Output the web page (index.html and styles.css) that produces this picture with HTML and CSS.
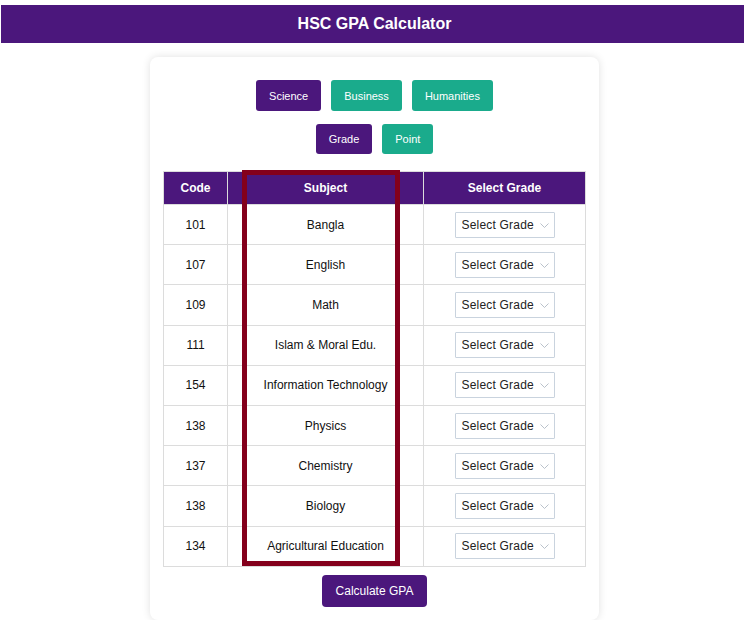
FILE: index.html
```html
<!DOCTYPE html>
<html lang="en">
<head>
    <meta charset="UTF-8">
    <meta name="viewport" content="width=device-width, initial-scale=1.0">
    <title>HSC GPA Calculator</title>
    <link rel="stylesheet" href="styles.css">
</head>
<body>
    <div class="page">
        <header>
            <h1>HSC GPA Calculator</h1>
        </header>

        <div class="card">
            <!-- Group / mode buttons -->
            <div class="btn-row">
                <button class="btn purple">Science</button>
                <button class="btn teal">Business</button>
                <button class="btn teal">Humanities</button>
            </div>
            <div class="btn-row">
                <button class="btn purple">Grade</button>
                <button class="btn teal">Point</button>
            </div>

            <div class="table-wrap">
                <table>
                    <thead>
                        <tr>
                            <th class="col-code">Code</th>
                            <th class="col-subject">Subject</th>
                            <th>Select Grade</th>
                        </tr>
                    </thead>
                    <tbody id="rows"></tbody>
                </table>
                <div class="highlight"></div>
            </div>

            <button class="btn purple calc">Calculate GPA</button>
        </div>
    </div>

    <script>
        var subjects = [
            ["101", "Bangla"],
            ["107", "English"],
            ["109", "Math"],
            ["111", "Islam &amp; Moral Edu."],
            ["154", "Information Technology"],
            ["138", "Physics"],
            ["137", "Chemistry"],
            ["138", "Biology"],
            ["134", "Agricultural Education"]
        ];
        var chevron = '<svg class="chev" width="9" height="5" viewBox="0 0 9 5"><path d="M0.5 0.5 L4.5 4.5 L8.5 0.5" fill="none" stroke="#b9c1ca" stroke-width="1"/></svg>';
        var html = "";
        subjects.forEach(function (s) {
            html += '<tr><td>' + s[0] + '</td><td>' + s[1] + '</td><td>' +
                '<span class="select-box"><select><option>Select Grade</option>' +
                '<option>A+</option><option>A</option><option>A-</option><option>B</option>' +
                '<option>C</option><option>D</option><option>F</option></select>' + chevron + '</span></td></tr>';
        });
        document.getElementById("rows").innerHTML = html;
    </script>
</body>
</html>
```

FILE: styles.css
```css
html, body {
    margin: 0;
    overflow: hidden;
}

body {
    background-color: #fff;
    font-family: "Liberation Sans", Arial, sans-serif;
    color: #111;
}

.page {
    width: 747px;
    padding: 5px 0 0 1px;
}

header {
    background-color: #4b177c;
    height: 38px;
    display: flex;
    justify-content: center;
    align-items: center;
}

header h1 {
    color: #fff;
    font-size: 16px;
    font-weight: bold;
    margin: 0;
}

.card {
    width: 423px;
    margin: 14px auto 0;
    padding: 23px 13px 13px;
    background-color: #fff;
    border-radius: 8px;
    box-shadow: 0 0 8px rgba(0, 0, 0, 0.12);
    display: flex;
    flex-direction: column;
    align-items: center;
}

.btn-row {
    display: flex;
    gap: 10px;
    margin-bottom: 13px;
}

.btn-row + .btn-row {
    margin-bottom: 17px;
}

.btn {
    font-family: "Liberation Sans", Arial, sans-serif;
    font-size: 11px;
    color: #fff;
    border: none;
    border-radius: 3px;
    height: 31px;
    padding: 0 13px;
    cursor: pointer;
}

.btn-row + .btn-row .btn {
    height: 30px;
}

.purple {
    background-color: #4b177c;
}

.teal {
    background-color: #1aab8c;
}

.table-wrap {
    position: relative;
    width: 100%;
}

table {
    width: 100%;
    border-collapse: collapse;
    font-size: 12px;
}

th, td {
    border: 1px solid #dcdcdc;
    text-align: center;
    padding: 0;
}

th {
    background-color: #4b177c;
    color: #fff;
    font-weight: bold;
    height: 32px;
}

td {
    height: 39.2px;
}

.col-code {
    width: 63px;
}

.col-subject {
    width: 195px;
}

.select-box {
    position: relative;
    display: inline-block;
    vertical-align: middle;
}

.select-box select {
    appearance: none;
    -webkit-appearance: none;
    width: 100px;
    height: 26px;
    border: 1px solid #c9d3de;
    border-radius: 1px;
    background-color: #fff;
    font-family: "Liberation Sans", Arial, sans-serif;
    font-size: 12px;
    color: #222;
    padding: 0 0 0 6px;
    letter-spacing: 0.2px;
}

.chev {
    position: absolute;
    right: 6px;
    top: 11px;
    pointer-events: none;
}

/* annotation box drawn over the subject column */
.highlight {
    position: absolute;
    left: 79px;
    top: -1px;
    width: 148px;
    height: 386px;
    border: 5px solid #84001c;
    pointer-events: none;
}

.calc {
    font-size: 12px;
    height: 32px;
    padding: 0 14px;
    border-radius: 4px;
    margin-top: 8px;
}
```
